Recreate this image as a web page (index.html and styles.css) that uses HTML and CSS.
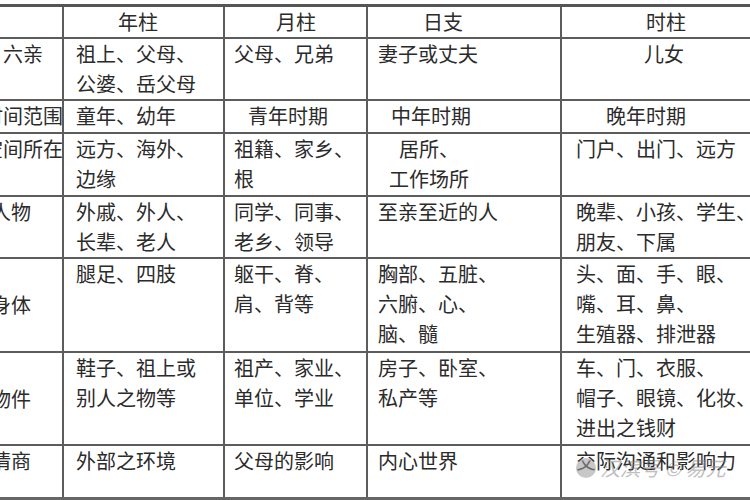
FILE: index.html
```html
<!DOCTYPE html>
<html lang="zh">
<head>
<meta charset="utf-8">
<link rel="stylesheet" href="styles.css">
</head>
<body>
<div class="frame">
  <table class="grid">
    <colgroup>
      <col class="c1"><col class="c2"><col class="c3"><col class="c4"><col class="c5">
    </colgroup>
    <tr class="r-head">
      <td class="lab"></td>
      <td class="h2">年柱</td>
      <td class="h3">月柱</td>
      <td class="h4">日支</td>
      <td class="h5">时柱</td>
    </tr>
    <tr class="r-liuqin">
      <td class="lab lab-a">六亲</td>
      <td class="k2">祖上、父母、<br>公婆、岳父母</td>
      <td class="k3">父母、兄弟</td>
      <td class="k4">妻子或丈夫</td>
      <td class="far">儿女</td>
    </tr>
    <tr class="r-time">
      <td class="lab">时间范围</td>
      <td class="k2">童年、幼年</td>
      <td class="mid">青年时期</td>
      <td class="mid">中年时期</td>
      <td class="mid2">晚年时期</td>
    </tr>
    <tr class="r-place">
      <td class="lab">空间所在</td>
      <td class="k2">远方、海外、<br>边缘</td>
      <td class="k3">祖籍、家乡、<br>根</td>
      <td class="k4 juso"><span class="l1">居所、</span><br><span class="l2">工作场所</span></td>
      <td class="k5">门户、出门、远方</td>
    </tr>
    <tr class="r-people">
      <td class="lab lab-b">人物</td>
      <td class="k2">外戚、外人、<br>长辈、老人</td>
      <td class="k3">同学、同事、<br>老乡、领导</td>
      <td class="k4">至亲至近的人</td>
      <td class="k5">晚辈、小孩、学生、<br>朋友、下属</td>
    </tr>
    <tr class="r-body">
      <td class="lab lab-b vmid">身体</td>
      <td class="k2">腿足、四肢</td>
      <td class="k3">躯干、脊、<br>肩、背等</td>
      <td class="k4">胸部、五脏、<br>六腑、心、<br>脑、髓</td>
      <td class="k5">头、面、手、眼、<br>嘴、耳、鼻、<br>生殖器、排泄器</td>
    </tr>
    <tr class="r-thing">
      <td class="lab lab-b vmid">物件</td>
      <td class="k2">鞋子、祖上或<br>别人之物等</td>
      <td class="k3">祖产、家业、<br>单位、学业</td>
      <td class="k4">房子、卧室、<br>私产等</td>
      <td class="k5">车、门、衣服、<br>帽子、眼镜、化妆、<br>进出之钱财</td>
    </tr>
    <tr class="r-eq">
      <td class="lab lab-b">情商</td>
      <td class="k2">外部之环境</td>
      <td class="k3">父母的影响</td>
      <td class="k4">内心世界</td>
      <td class="k5">交际沟通和影响力</td>
    </tr>
  </table>
  <div class="mark">
    <span class="mark-dot"></span>
    <span class="mark-text">汉滨号 © 易元</span>
  </div>
</div>
</body>
</html>
```
FILE: styles.css
```css
html, body {
  margin: 0;
  padding: 0;
  background: #ffffff;
}

.frame {
  width: 750px;
  height: 500px;
  overflow: hidden;
  background: #ffffff;
  padding-top: 4px;
  box-sizing: border-box;
  position: relative;
}

.grid {
  border-collapse: collapse;
  table-layout: fixed;
  width: 793px;
  margin-left: -31px;
  font-family: "Noto Sans CJK SC", "Noto Sans", sans-serif;
  font-size: 20px;
  line-height: 30px;
  color: #2b2b2b;
}

.c1 { width: 93px; }
.c2 { width: 161px; }
.c3 { width: 143px; }
.c4 { width: 194px; }
.c5 { width: 202px; }

.grid td {
  border: 2px solid #5c5c5c;
  vertical-align: top;
  padding: 0 0 0 11px;
  white-space: nowrap;
}

.grid .k2 { padding-left: 12px; }
.grid .k3 { padding-left: 9px; }
.grid .k4 { padding-left: 10px; }
.grid .k5 { padding-left: 14px; }

.grid .r-head td { border-top: 3px solid #555555; }
.grid .r-eq td { border-bottom: 3px solid #666666; }

.grid .r-head td { height: 28px; vertical-align: middle; }
.grid .r-liuqin td { height: 60px; }
.grid .r-time td { height: 31px; }
.grid .r-place td { height: 61px; }
.grid .r-people td { height: 59px; }
.grid .r-body td { height: 92px; }
.grid .r-thing td { height: 91px; }
.grid .r-eq td { height: 51px; }

.grid .h2 { padding-left: 54px; }
.grid .h3 { padding-left: 51px; }
.grid .h4 { padding-left: 55px; }
.grid .h5 { padding-left: 84px; }

.grid .lab { padding-left: 12px; }
.grid .lab-a { padding-left: 32px; }
.grid .lab-b { padding-left: 20px; }
.grid .vmid { vertical-align: middle; }

.grid .far { padding-left: 82px; }
.grid .mid { padding-left: 23px; }
.grid .mid2 { padding-left: 44px; }

.juso .l1 { padding-left: 21px; }
.juso .l2 { padding-left: 11px; }

.mark {
  position: absolute;
  left: 576px;
  top: 453px;
  display: flex;
  align-items: center;
  gap: 4px;
  opacity: 0.55;
  pointer-events: none;
}

.mark-dot {
  width: 20px;
  height: 20px;
  border-radius: 50%;
  background: #9a9a9a;
}

.mark-text {
  font-family: "Noto Sans CJK SC", sans-serif;
  font-size: 20px;
  font-style: italic;
  color: #8a8a8a;
  white-space: nowrap;
}
```
